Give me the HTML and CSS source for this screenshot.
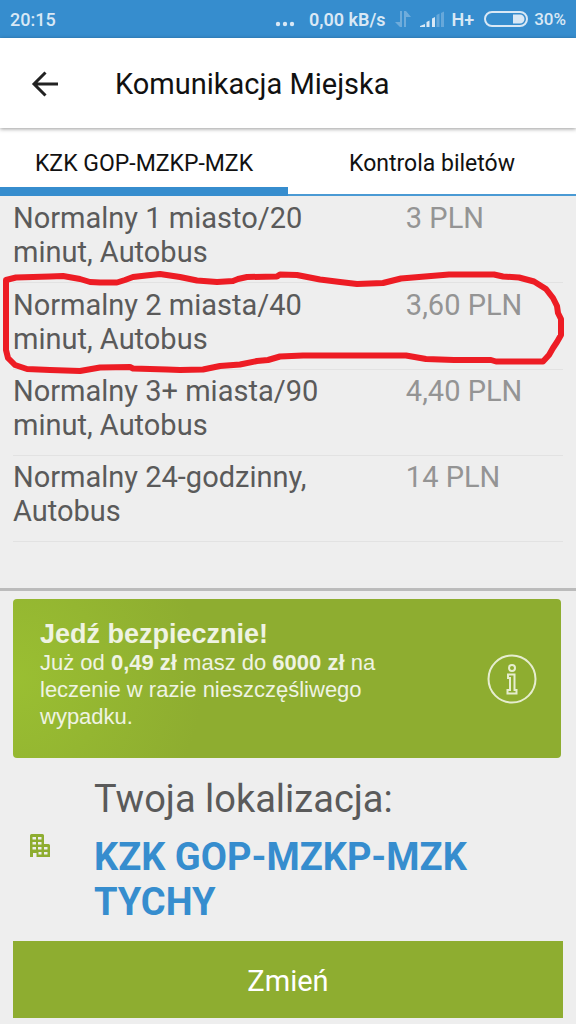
FILE: index.html
```html
<!DOCTYPE html>
<html lang="pl">
<head>
<meta charset="utf-8">
<meta name="viewport" content="width=device-width, initial-scale=1">
<title>Komunikacja Miejska</title>
<link rel="stylesheet" href="styles.css">
</head>
<body>
<div class="status">
  <span class="clock">20:15</span>
  <svg class="dots" viewBox="0 0 20 20" aria-hidden="true"><circle cx="3" cy="15" r="2.200"/><circle cx="10" cy="15" r="2.200"/><circle cx="17" cy="15" r="2.200"/></svg>
  <span class="speed">0,00 kB/s</span>
  <svg class="updown" viewBox="0 0 16 18" aria-hidden="true"><path d="M5 1h2v16H5L0 12h5zM9 17h2V7h5L11 1H9z"/></svg>
  <svg class="signal" viewBox="0 0 24 18" aria-hidden="true"><path d="M0 17v-1l5-2v3zM6.500 17v-5l3-1.500V17zM12 17V8.500L15 7v10z"/><path class="weak" d="M16.500 17V5l3-1.500V17zM21 17V3l3-1.500V17z"/></svg>
  <span class="network">H+</span>
  <svg class="battery" viewBox="0 0 44 16" aria-hidden="true"><rect class="shell" x="1" y="1" width="42" height="14" rx="7"/><path d="M29 3.500h7a4.500 4.500 0 0 1 0 9h-7z"/></svg>
  <span class="percent">30%</span>
</div>

<header class="header">
  <button class="back" type="button" aria-label="Wstecz">
    <svg viewBox="0 0 28 28" aria-hidden="true"><path d="M27 14H3M14.500 2.500L3 14l11.500 11.500"/></svg>
  </button>
  <h1 class="title">Komunikacja Miejska</h1>
</header>

<nav class="tabs">
  <button class="tab active" type="button">KZK GOP-MZKP-MZK</button>
  <button class="tab" type="button">Kontrola biletów</button>
</nav>

<main class="content">
  <ul class="tickets">
    <li class="ticket"><span class="name">Normalny 1 miasto/20 minut, Autobus</span><span class="price">3 PLN</span></li>
    <li class="ticket"><span class="name">Normalny 2 miasta/40 minut, Autobus</span><span class="price">3,60 PLN</span>
      <svg class="marker" viewBox="0 0 576 110" preserveAspectRatio="none" aria-hidden="true"><path d="M6 10L16 7.500 50 6.500 63 6 80 9 90 12 100 12.500H117L125 10 133 7 146 5.500 160 4 180 7 197 10.500 217 12 233 11 238 9 247 7 277 6.500 280 4.500 297 5 320 9.500 340 12 357 14 383 13 401 8.500 425 6.500 449 4.500H494L503 6.500 519 7.500 534 11.500 546 19 553 28 557 36 558 43 561 49V65L557 72 553 78 549 85 543 91.500H496L491 90 454 90 426 89 406 85.500H303L280 86.500 268 90 257 91 240 94.500 220 96 203 99.500 180 100 167 99.500 133 98.500 130 97 100 97.500 80 101 50 100 27 99 15 95 8 88 6 80z"/></svg>
    </li>
    <li class="ticket compact"><span class="name">Normalny 3+ miasta/90 minut, Autobus</span><span class="price">4,40 PLN</span></li>
    <li class="ticket compact"><span class="name">Normalny 24-godzinny, Autobus</span><span class="price">14 PLN</span></li>
  </ul>
</main>

<footer class="footer">
  <a class="banner" href="#">
    <span class="banner-text"><strong class="banner-title">Jedź bezpiecznie!</strong><br>Już od <b>0,49 zł</b> masz do <b>6000 zł</b> na<br>leczenie w razie nieszczęśliwego<br>wypadku.</span>
    <svg class="info" viewBox="0 0 50 50" aria-hidden="true"><circle cx="25" cy="25" r="23.500"/><circle cx="25" cy="14" r="3"/><path d="M21 20.500h6.500V36H29.500v3.500h-9V36H23V24h-2z"/></svg>
  </a>
  <section class="location">
    <svg class="building" viewBox="0 0 20 23" aria-hidden="true"><path fill-rule="evenodd" d="M1.500 0h11A1.500 1.500 0 0 1 14 1.500V10h4.500a1.500 1.500 0 0 1 1.500 1.500V23H6.500v-4H3v4H0V1.500A1.500 1.500 0 0 1 1.500 0zM2.500 3v2.500h3.500V3zM8 3v2.500h3.500V3zM2.500 8v2.500h3.500V8zM8 8v2.500h3.500V8zM2.500 13v2.500h3.500V13zM8 13v2.500h3.500V13zM14 13v2.500h3.500V13zM8.500 18v2.500h3V18zM14 18v2.500h3.500V18z"/></svg>
    <div>
      <h2 class="location-label">Twoja lokalizacja:</h2>
      <p class="location-name">KZK GOP-MZKP-MZK<br>TYCHY</p>
    </div>
  </section>
  <button class="change" type="button">Zmień</button>
</footer>
</body>
</html>
```
FILE: styles.css
```css
* {
  box-sizing: border-box;
}

body {
  margin: 0;
  min-height: 100vh;
  display: flex;
  flex-direction: column;
  background: #eee;
  color: #5a5a5a;
  font-family: Roboto, "Liberation Sans", sans-serif;
}

button {
  border: 0;
  padding: 0;
  background: none;
  font: inherit;
  color: inherit;
}

.status {
  display: flex;
  align-items: center;
  height: 38px;
  padding: 0 10px;
  background: #368dce;
  color: #d9e8f5;
  fill: #d9e8f5;
  font-size: 18px;
  font-weight: 500;
}

.clock {
  margin-right: auto;
}

.dots {
  width: 20px;
  height: 20px;
  margin-right: 14px;
}

.updown {
  width: 16px;
  height: 18px;
  margin: 0 9px;
  opacity: .35;
}

.signal {
  width: 24px;
  height: 18px;
  margin-right: 8px;
}

.weak {
  opacity: .3;
}

.battery {
  width: 44px;
  height: 16px;
  margin: 0 6px 0 10px;
}

.speed,
.network {
  font-weight: 600;
}

.percent {
  font-size: 17px;
}

.shell {
  fill: none;
  stroke: #d9e8f5;
  stroke-width: 2;
}

.header {
  position: relative;
  display: flex;
  align-items: center;
  gap: 56px;
  height: 90px;
  padding: 2px 31px 0;
  background: #fff;
  box-shadow: 0 1px 4px rgba(0, 0, 0, .4);
}

.back {
  width: 28px;
  height: 28px;
}

.back svg {
  display: block;
  fill: none;
  stroke: #222;
  stroke-width: 3;
}

.title {
  margin: 0;
  color: #111;
  font-size: 29px;
  font-weight: 400;
}

.tabs {
  display: grid;
  grid-template-columns: 1fr 1fr;
  height: 68px;
  background: #fff;
}

.tab {
  padding-top: 4px;
  border-bottom: 2px solid #4a9ad4;
  color: #111;
  font-size: 23px;
}

.active {
  padding-top: 11px;
  border-bottom: 9px solid #368dce;
}

.content {
  flex: 1;
  padding: 0 13px 46px;
}

.tickets {
  margin: 0;
  padding: 0;
  list-style: none;
}

.ticket {
  position: relative;
  display: grid;
  grid-template-columns: 5fr 2fr;
  padding: 5px 0 13px;
  border-bottom: 1px solid #e2e2e2;
  font-size: 29px;
  line-height: 34px;
}

.compact {
  padding: 4px 0 13px;
}

.name {
  padding-right: 48px;
}

.price {
  color: #949494;
}

.marker {
  position: absolute;
  top: -13px;
  left: -13px;
  width: calc(100% + 26px);
  height: 110px;
  z-index: 1;
  fill: none;
  stroke: #ed1c24;
  stroke-width: 6;
  stroke-linejoin: round;
  pointer-events: none;
}

.footer {
  padding: 8px 13px 6px;
  border-top: 3px solid #bbb;
}

.banner {
  display: flex;
  align-items: center;
  justify-content: space-between;
  min-height: 159px;
  padding: 0 24px 0 27px;
  margin-right: 2px;
  border-radius: 4px;
  background: radial-gradient(circle at 0 50%, #9abf32, #8ead30 190px);
  color: #eff3e2;
  font-family: "Liberation Sans", sans-serif;
  font-size: 22px;
  line-height: 27px;
  text-decoration: none;
}

.banner-text {
  padding-bottom: 6px;
}

.banner-title {
  font-size: 27px;
}

.info {
  flex: none;
  width: 50px;
  height: 50px;
  fill: none;
  stroke: #e6edcf;
  stroke-width: 2;
}

.location {
  display: flex;
  align-items: center;
  gap: 44px;
  padding: 19px 17px 16px;
}

.building {
  flex: none;
  width: 20px;
  height: 23px;
  margin-bottom: 12px;
  fill: #8ead30;
}

.location-label {
  margin: 0 0 13px;
  font-size: 38px;
  font-weight: 400;
  line-height: 45px;
}

.location-name {
  margin: 0;
  color: #368dce;
  font-size: 38px;
  font-weight: 700;
  line-height: 45px;
}

.change {
  display: block;
  width: 100%;
  height: 77px;
  padding-top: 2px;
  background: #8ead30;
  color: #fff;
  font-size: 29px;
}
```
